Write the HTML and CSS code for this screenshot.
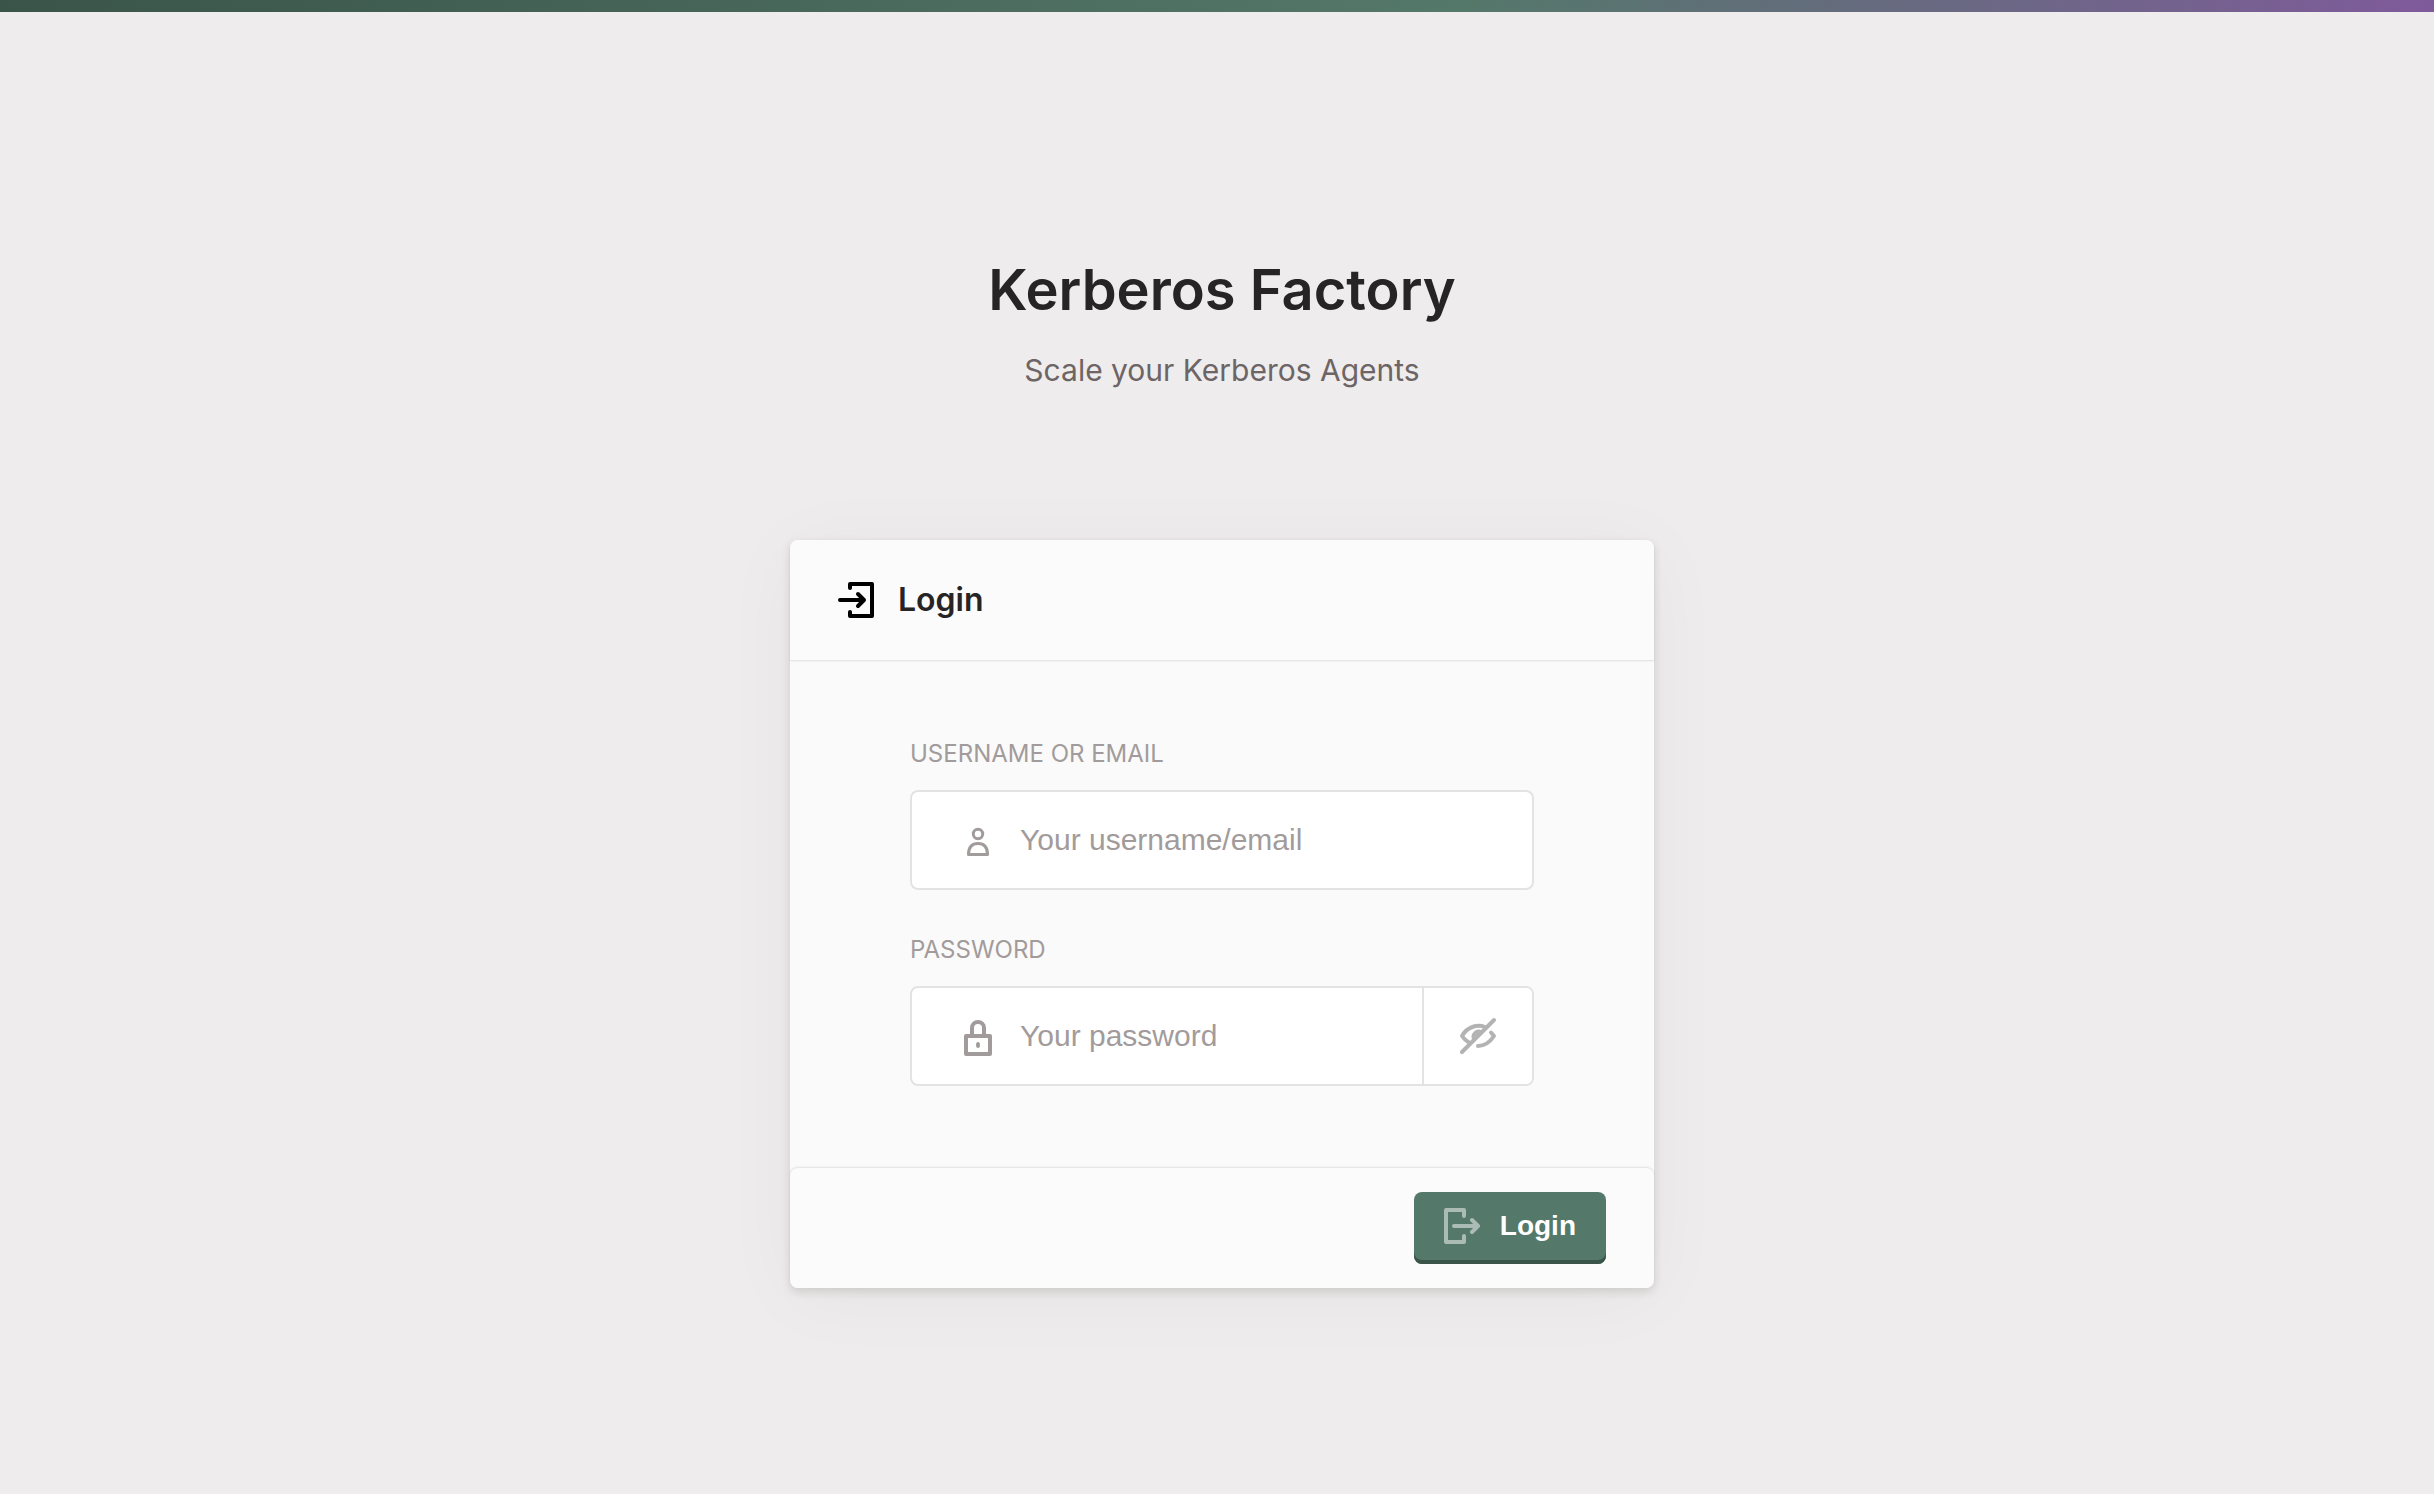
FILE: index.html
```html
<!DOCTYPE html>
<html lang="en">
<head>
<meta charset="utf-8">
<meta name="viewport" content="width=device-width, initial-scale=1">
<title>Kerberos Factory</title>
<link rel="stylesheet" href="styles.css">
</head>
<body>
<div class="topbar"></div>
<main class="page">
  <header class="intro">
    <h1 class="intro-title">Kerberos Factory</h1>
    <p class="intro-subtitle">Scale your Kerberos Agents</p>
  </header>
  <form class="card">
    <div class="card-header">
      <svg class="icon" viewBox="0 0 40 40" aria-hidden="true"><path d="M4 20H28M22 14l6 6-6 6M14 8V4H36V36H14V32"/></svg>
      <h2 class="card-title">Login</h2>
    </div>
    <div class="card-body">
      <div class="field">
        <label class="field-label" for="username">USERNAME OR EMAIL</label>
        <div class="control">
          <svg class="icon icon-field icon-user" viewBox="0 0 40 40" aria-hidden="true"><circle cx="20" cy="14" r="4.7"/><path d="M10.5 34.5C10.5 27 14 23.5 20 23.5S29.5 27 29.5 34.5Z"/></svg>
          <input class="control-input" id="username" type="text" placeholder="Your username/email">
        </div>
      </div>
      <div class="field">
        <label class="field-label" for="password">PASSWORD</label>
        <div class="control">
          <svg class="icon icon-field" viewBox="0 0 40 40" aria-hidden="true"><rect x="8" y="20" width="24" height="18"/><path d="M14 20V12a6 6 0 0 1 12 0V20"/><ellipse class="fill" cx="20" cy="29" rx="2" ry="3"/></svg>
          <input class="control-input" id="password" type="password" placeholder="Your password">
          <button class="reveal" type="button" aria-label="Show password">
            <svg class="icon" viewBox="0 0 40 40" aria-hidden="true"><path d="M4 36L36 4M27 11C19 8 9 11 4 20c2 3 4 5 7 6.500M33 16.500L36 20C32 26 26 30 20 30"/><path class="fill" d="M14.500 24A7 7 0 0 1 24 14.500Z"/></svg>
          </button>
        </div>
      </div>
    </div>
    <div class="card-footer">
      <button class="submit" type="submit">
        <svg class="icon" viewBox="0 0 40 40" aria-hidden="true"><path d="M12 20H36M30 14l6 6-6 6M22 10V4H4V36H22V30"/></svg>
        <span>Login</span>
      </button>
    </div>
  </form>
</main>
</body>
</html>
```
FILE: styles.css
```css
* {
  box-sizing: border-box;
}

body {
  margin: 0;
  min-height: 100vh;
  background: #eeecec;
  color: #272425;
  font-family: Inter, "Liberation Sans", sans-serif;
}

.topbar {
  height: 12px;
  background: linear-gradient(90deg, #3a5449, #54786a 60%, #7f5a9b);
}

.page {
  display: flex;
  flex-direction: column;
  align-items: center;
  padding: 244px 0 120px 10px;
}

.intro {
  margin-bottom: 150px;
  text-align: center;
}

.intro-title {
  margin: 0 0 26px;
  font-size: 56px;
  line-height: 68px;
  font-weight: 600;
}

.intro-subtitle {
  margin: 0;
  color: #6c6465;
  font-size: 30px;
  line-height: 40px;
}

.card {
  width: 100%;
  max-width: 864px;
  border-radius: 8px;
  background: #fafafa;
  box-shadow: 0 4px 10px rgba(39, 36, 37, 0.14), 0 8px 80px rgba(39, 36, 37, 0.04);
}

.card-header,
.card-footer {
  display: flex;
  align-items: center;
  height: 120px;
  padding: 0 48px;
  border-radius: 8px;
  background: #fbfbfb;
}

.card-header {
  gap: 22px;
  padding-left: 46px;
  border-radius: 8px 8px 0 0;
  box-shadow: 0 1px 2px rgba(39, 36, 37, 0.12);
}

.card-title {
  margin: 0;
  font-size: 32px;
  line-height: 40px;
  font-weight: 600;
}

.card-body {
  display: flex;
  flex-direction: column;
  gap: 44px;
  padding: 78px 120px 82px;
}

.field {
  display: flex;
  flex-direction: column;
  gap: 20px;
}

.field-label {
  color: #a29b9b;
  font-size: 24px;
  line-height: 32px;
}

.control {
  display: flex;
  align-items: center;
  height: 100px;
  border: 2px solid #e3e3e3;
  border-radius: 8px;
  background: #fff;
  overflow: hidden;
}

.control-input {
  flex: 1;
  min-width: 0;
  height: 100%;
  padding: 0;
  border: 0;
  outline: 0;
  background: transparent;
  color: #272425;
  font-family: "Liberation Sans", Arial, sans-serif;
  font-size: 30px;
}

.control-input::placeholder {
  color: #a29b9b;
  opacity: 1;
}

.icon {
  flex: none;
  width: 40px;
  height: 40px;
  fill: none;
  stroke: currentColor;
  stroke-width: 4;
  stroke-linecap: round;
  stroke-linejoin: round;
}

.card-header .icon {
  color: #000;
}

.icon .fill {
  fill: currentColor;
  stroke: none;
}

.icon-field {
  margin: 0 22px 0 46px;
  color: #a29b9b;
}

.icon-user {
  stroke-width: 3;
}

.reveal {
  display: flex;
  align-items: center;
  justify-content: center;
  width: 110px;
  height: 100%;
  padding: 0;
  border: 0;
  border-left: 2px solid #e3e3e3;
  background: #fff;
  color: #b3b3b3;
}

.card-footer {
  justify-content: flex-end;
  box-shadow: 0 -1px 2px rgba(39, 36, 37, 0.12);
}

.submit {
  display: flex;
  align-items: center;
  gap: 18px;
  height: 72px;
  padding: 0 30px 4px 28px;
  border: 0;
  border-radius: 8px;
  background: #54786a;
  box-shadow: inset 0 -4px 0 #3a5449;
  color: #fff;
  font-family: "Liberation Sans", Arial, sans-serif;
  font-size: 28px;
  font-weight: 700;
}

.submit .icon {
  opacity: 0.5;
}
```
